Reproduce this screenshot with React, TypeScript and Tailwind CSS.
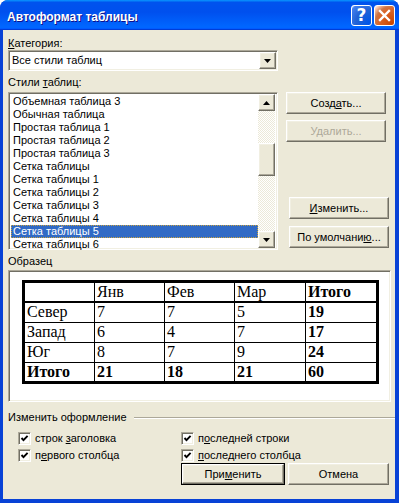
import React from "react"

const raised =
  "border border-t-white border-l-white border-r-[#716F64] border-b-[#716F64] shadow-[inset_-1px_-1px_0_#ACA899,inset_1px_1px_0_#F1EFE2] bg-[#ECE9D8]"
const sunken =
  "border border-t-[#ACA899] border-l-[#ACA899] border-r-white border-b-white shadow-[inset_1px_1px_0_#716F64,inset_-1px_-1px_0_#F1EFE2]"

const styles = [
  "Объемная таблица 3",
  "Обычная таблица",
  "Простая таблица 1",
  "Простая таблица 2",
  "Простая таблица 3",
  "Сетка таблицы",
  "Сетка таблицы 1",
  "Сетка таблицы 2",
  "Сетка таблицы 3",
  "Сетка таблицы 4",
  "Сетка таблицы 5",
  "Сетка таблицы 6",
]

const rows = [
  { name: "Север", vals: ["7", "7", "5"], total: "19" },
  { name: "Запад", vals: ["6", "4", "7"], total: "17" },
  { name: "Юг", vals: ["8", "7", "9"], total: "24" },
]

function Arrow({ up }: { up?: boolean }) {
  return (
    <svg width="7" height="4" viewBox="0 0 7 4">
      {up ? <path d="M3.5 0 L7 4 L0 4 Z" fill="#000" /> : <path d="M0 0 L7 0 L3.5 4 Z" fill="#000" />}
    </svg>
  )
}

function Check({ children }: { children: React.ReactNode }) {
  return (
    <div className="flex items-center h-[13px]">
      <div className={`w-[13px] h-[13px] bg-white flex items-center justify-center ${sunken}`}>
        <svg width="9" height="9" viewBox="0 0 9 9">
          <path d="M1.5 4 L3.5 6.2 L7.6 1.8" stroke="#000" strokeWidth="1.9" fill="none" />
        </svg>
      </div>
      <span className="ml-[4px] leading-[13px]">{children}</span>
    </div>
  )
}

function Btn({
  children,
  className = "",
  disabled,
}: {
  children: React.ReactNode
  className?: string
  disabled?: boolean
}) {
  return (
    <div
      className={`h-[22px] flex items-center justify-center ${raised} ${disabled ? "text-[#ACA899]" : ""} ${className}`}
    >
      {children}
    </div>
  )
}

export default function App() {
  return (
    <div className="w-[399px] h-[503px] bg-white font-['Liberation_Sans',Arial,sans-serif] text-[11px] text-black">
      <div className="w-[399px] h-[503px] flex flex-col rounded-t-[8px] bg-[#0842D6] overflow-hidden">
        {/* title bar */}
        <div className="h-[30px] shrink-0 flex items-center pl-[7px] pr-[4px] bg-[linear-gradient(180deg,#0997ff,#0053ee_8%,#0050ee_40%,#06f_88%,#06f_93%,#005bff_95%,#003dd7_96%,#003dd7)]">
          <span className="text-white font-bold text-[12px] [text-shadow:1px_1px_#0f1089] mt-[3px]">
            Автоформат таблицы
          </span>
          <div className="ml-auto flex gap-[2px] mt-[1px]">
            <div className="w-[21px] h-[21px] rounded-[3px] border border-white bg-[radial-gradient(circle_at_90%_90%,#0054e9_0%,#2263d5_55%,#4480f0_90%,#fff_100%)] flex items-center justify-center">
              <span className="text-white font-bold text-[17px] leading-none font-['DejaVu_Sans',sans-serif]">?</span>
            </div>
            <div className="w-[21px] h-[21px] rounded-[3px] border border-white bg-[radial-gradient(circle_at_90%_90%,#cc4600_0%,#dc6527_55%,#cd7546_70%,#ffccb2_90%,#fff_100%)] flex items-center justify-center">
              <svg width="13" height="13" viewBox="0 0 13 13">
                <path d="M2 2 L11 11 M11 2 L2 11" stroke="#fff" strokeWidth="2.4" strokeLinecap="square" />
              </svg>
            </div>
          </div>
        </div>

        {/* body */}
        <div className="flex-1 ml-[3px] mr-[4px] mb-[4px] bg-[#ECE9D8] pl-[5px] pt-[7px] flex flex-col">
          <div className="leading-[13px]">
            <span className="underline">К</span>атегория:
          </div>
          <div className={`w-[270px] h-[21px] bg-white flex items-center ${sunken}`}>
            <span className="pl-[3px] leading-[13px]">Все стили таблиц</span>
            <div className={`ml-auto mr-[1px] w-[17px] h-[17px] flex items-center justify-center ${raised}`}>
              <Arrow />
            </div>
          </div>

          <div className="mt-[5px] leading-[13px]">
            Стили <span className="underline">т</span>аблиц:
          </div>
          <div className="mt-[3px] flex">
            <div className={`w-[270px] h-[158px] bg-white flex ${sunken} p-[2px]`}>
              <div className="flex-1 flex flex-col">
                {styles.map((s) => (
                  <div
                    key={s}
                    className={`h-[13px] leading-[13px] pl-[2px] ${
                      s === "Сетка таблицы 5"
                        ? "bg-[#316AC5] text-white outline outline-1 outline-dotted outline-[#c9a23f] -outline-offset-1"
                        : ""
                    }`}
                  >
                    {s}
                  </div>
                ))}
              </div>
              <div className="w-[17px] -mt-[1px] -mb-[1px] flex flex-col bg-[image:repeating-conic-gradient(#fff_0%_25%,#ECE9D8_0%_50%)] bg-[length:2px_2px]">
                <div className={`h-[17px] flex items-center justify-center ${raised}`}>
                  <Arrow up />
                </div>
                <div className={`mt-[32px] h-[33px] ${raised}`} />
                <div className={`mt-auto h-[17px] flex items-center justify-center ${raised}`}>
                  <Arrow />
                </div>
              </div>
            </div>
            <div className="ml-[8px] w-[103px] flex flex-col">
              <Btn className="w-[100px]">
                <span>
                  Созд<span className="underline">а</span>ть...
                </span>
              </Btn>
              <Btn className="w-[100px] mt-[6px]" disabled>
                Удалить...
              </Btn>
              <Btn className="w-[100px] ml-[3px] mt-[55px]">
                <span>
                  <span className="underline">И</span>зменить...
                </span>
              </Btn>
              <Btn className="w-[100px] ml-[3px] mt-[7px]">
                <span>
                  По умолчани<span className="underline">ю</span>...
                </span>
              </Btn>
            </div>
          </div>

          <div className="mt-[5px] leading-[13px]">Образец</div>
          <div className={`mt-[2px] w-[383px] h-[132px] bg-white pl-[13px] pt-[9px] ${sunken}`}>
            <table className="table-fixed border-collapse border-[3px] border-black w-[354px] font-['Liberation_Serif','Times_New_Roman',serif] text-[16px]">
              <colgroup>
                <col className="w-[71px]" />
                <col className="w-[70px]" />
                <col className="w-[70px]" />
                <col className="w-[71px]" />
                <col className="w-[72px]" />
              </colgroup>
              <tbody>
                <tr className="h-[20px] border-b-2 border-black">
                  <td className="border border-black px-[2px] leading-[18px]"></td>
                  <td className="border border-black px-[2px] leading-[18px]">Янв</td>
                  <td className="border border-black px-[2px] leading-[18px]">Фев</td>
                  <td className="border border-black px-[2px] leading-[18px]">Мар</td>
                  <td className="border border-black px-[2px] leading-[18px] font-bold">Итого</td>
                </tr>
                {rows.map((r) => (
                  <tr key={r.name} className="h-[20px]">
                    <td className="border border-black px-[2px] leading-[18px]">{r.name}</td>
                    {r.vals.map((v, i) => (
                      <td key={i} className="border border-black px-[2px] leading-[18px]">
                        {v}
                      </td>
                    ))}
                    <td className="border border-black px-[2px] leading-[18px] font-bold">{r.total}</td>
                  </tr>
                ))}
                <tr className="h-[20px] font-bold">
                  <td className="border border-black px-[2px] leading-[18px]">Итого</td>
                  <td className="border border-black px-[2px] leading-[18px]">21</td>
                  <td className="border border-black px-[2px] leading-[18px]">18</td>
                  <td className="border border-black px-[2px] leading-[18px]">21</td>
                  <td className="border border-black px-[2px] leading-[18px]">60</td>
                </tr>
              </tbody>
            </table>
          </div>

          <div className="mt-[9px] flex items-center">
            <span className="leading-[13px]">Изменить оформление</span>
            <div className="ml-[7px] w-[261px] h-[2px] border-t border-t-[#ACA899] border-b border-b-white" />
          </div>

          <div className="mt-[8px] pl-[10px] grid grid-cols-[163px_1fr] gap-y-[4px]">
            <Check>
              строк <span className="underline">з</span>аголовка
            </Check>
            <Check>
              п<span className="underline">о</span>следней строки
            </Check>
            <Check>
              п<span className="underline">е</span>рвого столбца
            </Check>
            <Check>
              <span className="underline">п</span>оследнего столбца
            </Check>
          </div>

          <div className="mt-[1px] flex pl-[173px]">
            <div className="w-[104px] h-[22px] border border-black">
              <div className={`w-full h-full flex items-center justify-center ${raised}`}>
                <span>
                  При<span className="underline">м</span>енить
                </span>
              </div>
            </div>
            <Btn className="w-[101px] ml-[3px]">Отмена</Btn>
          </div>
        </div>
      </div>
    </div>
  )
}
